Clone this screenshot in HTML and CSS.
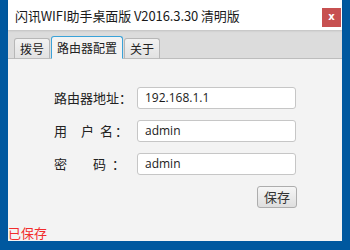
FILE: index.html
```html
<!DOCTYPE html>
<html>
<head>
<meta charset="utf-8">
<link rel="stylesheet" href="styles.css">
</head>
<body>
<div class="window">
  <div class="titlebar">
    <span class="title">闪讯WIFI助手桌面版 V2016.3.30 清明版</span>
    <span class="close">x</span>
  </div>
  <div class="tabbar">
    <div class="tab">拨号</div>
    <div class="tab active">路由器配置</div>
    <div class="tab">关于</div>
  </div>
  <div class="content">
    <div class="form">
      <div class="row">
        <div class="label">路由器地址<span class="colon c1">：</span></div>
        <div class="input">192.168.1.1</div>
      </div>
      <div class="row">
        <div class="label"><span>用</span><span class="hu">户</span><span class="ming">名</span><span class="colon c2">：</span></div>
        <div class="input">admin</div>
      </div>
      <div class="row">
        <div class="label"><span>密</span><span class="ma">码</span><span class="colon c3">：</span></div>
        <div class="input">admin</div>
      </div>
      <div class="actions">
        <button class="btn">保存</button>
      </div>
    </div>
    <div class="status">已保存</div>
  </div>
</div>
</body>
</html>
```

FILE: styles.css
```css
* { box-sizing: border-box; }
html, body {
  margin: 0;
  padding: 0;
}
body {
  width: 350px;
  height: 250px;
  background: #00589f;
  font-family: "Noto Sans CJK SC", "Open Sans", sans-serif;
  color: #222;
  overflow: hidden;
}
.window {
  margin-left: 8px;
  width: 334px;
  height: 241px;
  background: #f3f3f3;
  display: flex;
  flex-direction: column;
}
.titlebar {
  height: 30px;
  background: #fff;
  display: flex;
  align-items: center;
  padding-left: 7px;
  padding-right: 1px;
  position: relative;
  z-index: 1;
  box-shadow: 0 1px 2px rgba(0,0,0,0.12);
}
.title {
  font-size: 13px;
  line-height: 16px;
  color: #1a1a1a;
  margin-top: 2px;
  letter-spacing: -0.1px;
}
.close {
  margin-left: auto;
  width: 19px;
  height: 19px;
  margin-top: 5px;
  background: #c75050;
  color: #fff;
  font-family: "DejaVu Sans", sans-serif;
  font-weight: bold;
  font-size: 10px;
  line-height: 17px;
  text-align: center;
}
.tabbar {
  height: 29px;
  background: #dcdcdc;
  border-bottom: 1px solid #bdbdbd;
  display: flex;
  align-items: flex-end;
  padding-left: 6px;
  gap: 1px;
}
.tab {
  height: 21px;
  margin-bottom: -1px;
  padding: 0 5px;
  font-size: 12px;
  line-height: 19px;
  color: #222;
  border: 1px solid #b7b7b7;
  border-bottom: 1px solid #bdbdbd;
  border-radius: 3px 3px 0 0;
  background: linear-gradient(#f2f2f2, #e2e2e2);
}
.tab.active {
  height: 23px;
  line-height: 21px;
  border-color: #3aa2d8;
  border-bottom: 1px solid #f3f3f3;
  background: #f3f3f3;
  padding: 0 5px;
}
.content {
  flex: 1;
  display: flex;
  flex-direction: column;
}
.form {
  padding: 28px 0 0 46px;
  display: flex;
  flex-direction: column;
  gap: 11px;
}
.row {
  display: flex;
  align-items: center;
  height: 22px;
}
.label {
  width: 83px;
  display: flex;
  font-size: 13px;
  line-height: 16px;
  color: #222;
}
.label span { display: block; }
.hu { margin-left: 14px; }
.ming { margin-left: 6px; }
.ma { margin-left: 26px; }
.colon { }
.c1 { margin-left: 0; }
.c2 { margin-left: 2px; }
.c3 { margin-left: 6px; }
.input {
  width: 159px;
  height: 22px;
  background: #fff;
  border: 1px solid #c6c6c6;
  border-radius: 3px;
  padding-left: 7px;
  font-family: "Open Sans", "Noto Sans CJK SC", sans-serif;
  font-size: 12px;
  line-height: 20px;
  color: #1a1a1a;
}
.actions {
  display: flex;
  justify-content: flex-end;
  width: 243px;
}
.btn {
  width: 40px;
  height: 22px;
  padding: 0;
  border: 1px solid #adadad;
  border-radius: 3px;
  background: linear-gradient(#f6f6f6, #dedede);
  font-family: "Noto Sans CJK SC", sans-serif;
  font-size: 13px;
  line-height: 20px;
  color: #333;
}
.status {
  margin-top: auto;
  margin-bottom: 1px;
  font-size: 13px;
  line-height: 15px;
  color: #f22c2c;
}
```
